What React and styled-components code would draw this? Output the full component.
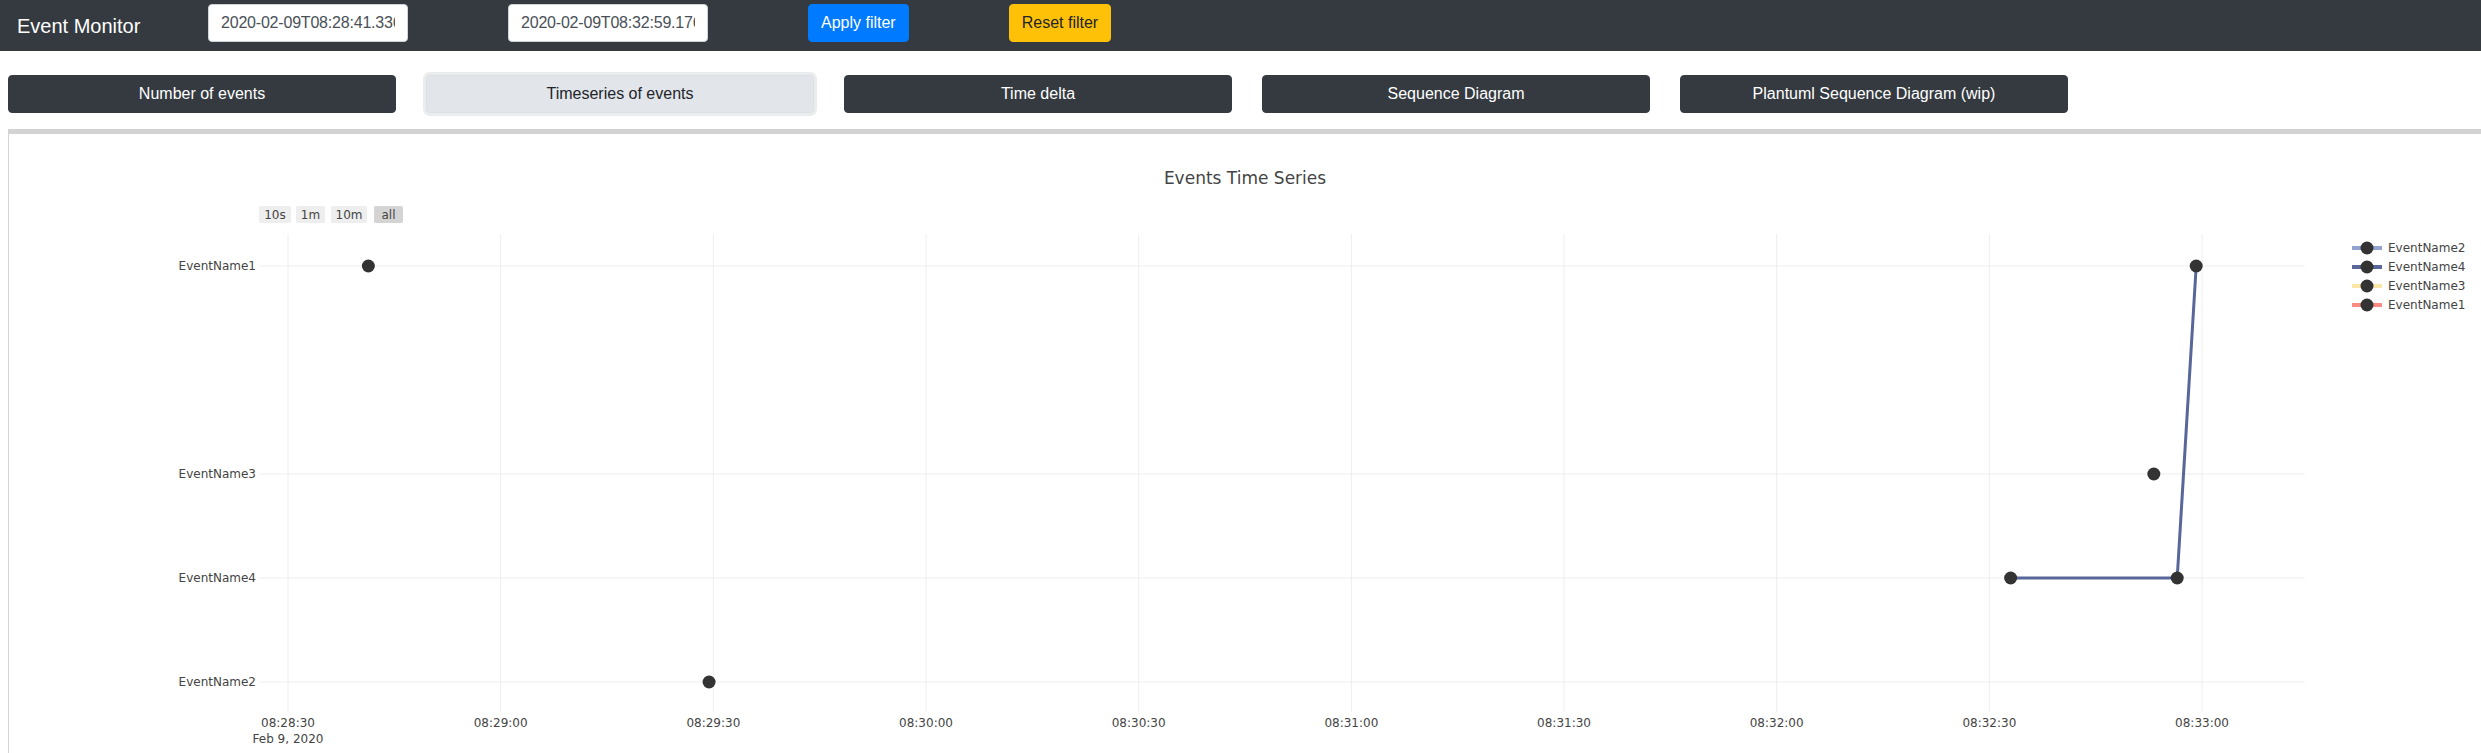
import React from "react";
import styled, { createGlobalStyle } from "styled-components";

const GlobalStyle = createGlobalStyle`
  body {
    margin: 0;
    background: #fff;
    font-family: "Liberation Sans", Arial, sans-serif;
    color: #212529;
  }
  * { box-sizing: border-box; }
`;

const Navbar = styled.nav`
  height: 51px;
  background: #343a40;
  display: flex;
  align-items: flex-start;
  padding: 4px 0 0 17px;
`;

const Brand = styled.div`
  flex: 0 0 191px;
  align-self: center;
  margin-top: -3px;
  font-size: 20px;
  color: #fff;
`;

const FilterForm = styled.form`
  display: flex;
  gap: 100px;
`;

const DateInput = styled.input`
  width: 200px;
  height: 38px;
  padding: 6px 12px;
  border: 1px solid #ced4da;
  border-radius: 4px;
  background: #fff;
  font-family: "Liberation Sans", Arial, sans-serif;
  font-size: 16px;
  letter-spacing: -0.2px;
  color: #495057;
  outline: none;
`;

const FilterButton = styled.button`
  height: 38px;
  padding: 0 12px;
  border: 1px solid ${(p) => (p.$variant === "warning" ? "#ffc107" : "#007bff")};
  border-radius: 4px;
  background: ${(p) => (p.$variant === "warning" ? "#ffc107" : "#007bff")};
  color: ${(p) => (p.$variant === "warning" ? "#212529" : "#fff")};
  font-family: "Liberation Sans", Arial, sans-serif;
  font-size: 16px;
  cursor: pointer;
`;

const TabRow = styled.div`
  display: flex;
  gap: 30px;
  padding: 24px 0 0 8px;
`;

const TabButton = styled.button`
  width: 388px;
  height: 38px;
  border-radius: 4px;
  border: 1px solid ${(p) => (p.$active ? "#dae0e5" : "#343a40")};
  background: ${(p) => (p.$active ? "#e2e6ea" : "#343a40")};
  color: ${(p) => (p.$active ? "#212529" : "#fff")};
  box-shadow: ${(p) => (p.$active ? "0 0 0 3px rgba(216, 217, 219, 0.5)" : "none")};
  font-family: "Liberation Sans", Arial, sans-serif;
  font-size: 16px;
  cursor: pointer;
`;

const ChartPanel = styled.div`
  margin: 16px 0 0 8px;
  border-top: 5px solid #d3d3d3;
  border-left: 1px solid #d3d3d3;
  height: 640px;
  overflow: hidden;
`;

const ChartSvg = styled.svg`
  display: block;
  font-family: "DejaVu Sans", Verdana, sans-serif;
  font-size: 12px;
  fill: #444;
`;

// plot geometry (svg coords)
const PLOT = { left: 250, right: 2296, top: 100, bottom: 578 };
const T0 = 279; // x of 08:28:30
const PX_PER_SEC = 7.089;
const xOf = (s) => T0 + s * PX_PER_SEC;
const CAT_Y = { EventName1: 132, EventName3: 340, EventName4: 444, EventName2: 548 };

const ticks = ["08:28:30", "08:29:00", "08:29:30", "08:30:00", "08:30:30", "08:31:00", "08:31:30", "08:32:00", "08:32:30", "08:33:00"];

const rangeButtons = [
  { label: "10s", x: 250, w: 32 },
  { label: "1m", x: 287, w: 29 },
  { label: "10m", x: 322, w: 36 },
  { label: "all", x: 365, w: 29, active: true },
];

const legend = [
  { name: "EventName2", color: "rgba(120, 140, 195, 0.8)" },
  { name: "EventName4", color: "#5a6899" },
  { name: "EventName3", color: "#fae6a6" },
  { name: "EventName1", color: "#fb8a82" },
];

const points = [
  { cat: "EventName1", s: 11.336 },
  { cat: "EventName2", s: 59.4 },
  { cat: "EventName4", s: 243.0 },
  { cat: "EventName4", s: 266.5 },
  { cat: "EventName3", s: 263.2 },
  { cat: "EventName1", s: 269.176 },
];

const linePath = [
  [243.0, "EventName4"],
  [266.5, "EventName4"],
  [269.176, "EventName1"],
]
  .map(([s, c]) => `${xOf(s).toFixed(1)},${CAT_Y[c]}`)
  .join(" ");

function TimeSeriesChart() {
  return (
    <ChartSvg width="2472" height="640">
      <text x="1236" y="50" fontSize="17" textAnchor="middle">Events Time Series</text>

      {rangeButtons.map((b) => (
        <g key={b.label}>
          <rect x={b.x} y="72" width={b.w} height="17" rx="2" fill={b.active ? "#d4d4d4" : "#eee"} />
          <text x={b.x + b.w / 2} y="85" textAnchor="middle">{b.label}</text>
        </g>
      ))}

      {ticks.map((t, i) => (
        <line key={t} x1={xOf(i * 30)} x2={xOf(i * 30)} y1={PLOT.top} y2={PLOT.bottom} stroke="#eee" strokeWidth="1" />
      ))}
      {Object.entries(CAT_Y).map(([c, y]) => (
        <g key={c}>
          <line x1={PLOT.left} x2={PLOT.right} y1={y} y2={y} stroke="#eee" strokeWidth="1" />
          <text x="247" y={y + 4} textAnchor="end">{c}</text>
        </g>
      ))}

      {ticks.map((t, i) => (
        <text key={t} x={xOf(i * 30)} y="593" textAnchor="middle">{t}</text>
      ))}
      <text x={xOf(0)} y="609" textAnchor="middle">Feb 9, 2020</text>

      <polyline points={linePath} fill="none" stroke="#58669a" strokeWidth="3" strokeLinejoin="round" />
      {points.map((p, i) => (
        <circle key={i} cx={xOf(p.s)} cy={CAT_Y[p.cat]} r="6.5" fill="#333" />
      ))}

      {legend.map((l, i) => {
        const y = 114 + i * 19;
        return (
          <g key={l.name}>
            <line x1="2343" x2="2373" y1={y} y2={y} stroke={l.color} strokeWidth="4" />
            <circle cx="2358" cy={y} r="6.5" fill="#333" />
            <text x="2379" y={y + 4}>{l.name}</text>
          </g>
        );
      })}
    </ChartSvg>
  );
}

const tabs = ["Number of events", "Timeseries of events", "Time delta", "Sequence Diagram", "Plantuml Sequence Diagram (wip)"];

export default function App() {
  return (
    <>
      <GlobalStyle />
      <Navbar>
        <Brand>Event Monitor</Brand>
        <FilterForm onSubmit={(e) => e.preventDefault()}>
          <DateInput type="text" readOnly value="2020-02-09T08:28:41.336" />
          <DateInput type="text" readOnly value="2020-02-09T08:32:59.176" />
          <FilterButton type="submit">Apply filter</FilterButton>
          <FilterButton type="button" $variant="warning">Reset filter</FilterButton>
        </FilterForm>
      </Navbar>
      <TabRow>
        {tabs.map((t) => (
          <TabButton key={t} $active={t === "Timeseries of events"}>{t}</TabButton>
        ))}
      </TabRow>
      <ChartPanel>
        <TimeSeriesChart />
      </ChartPanel>
    </>
  );
}
